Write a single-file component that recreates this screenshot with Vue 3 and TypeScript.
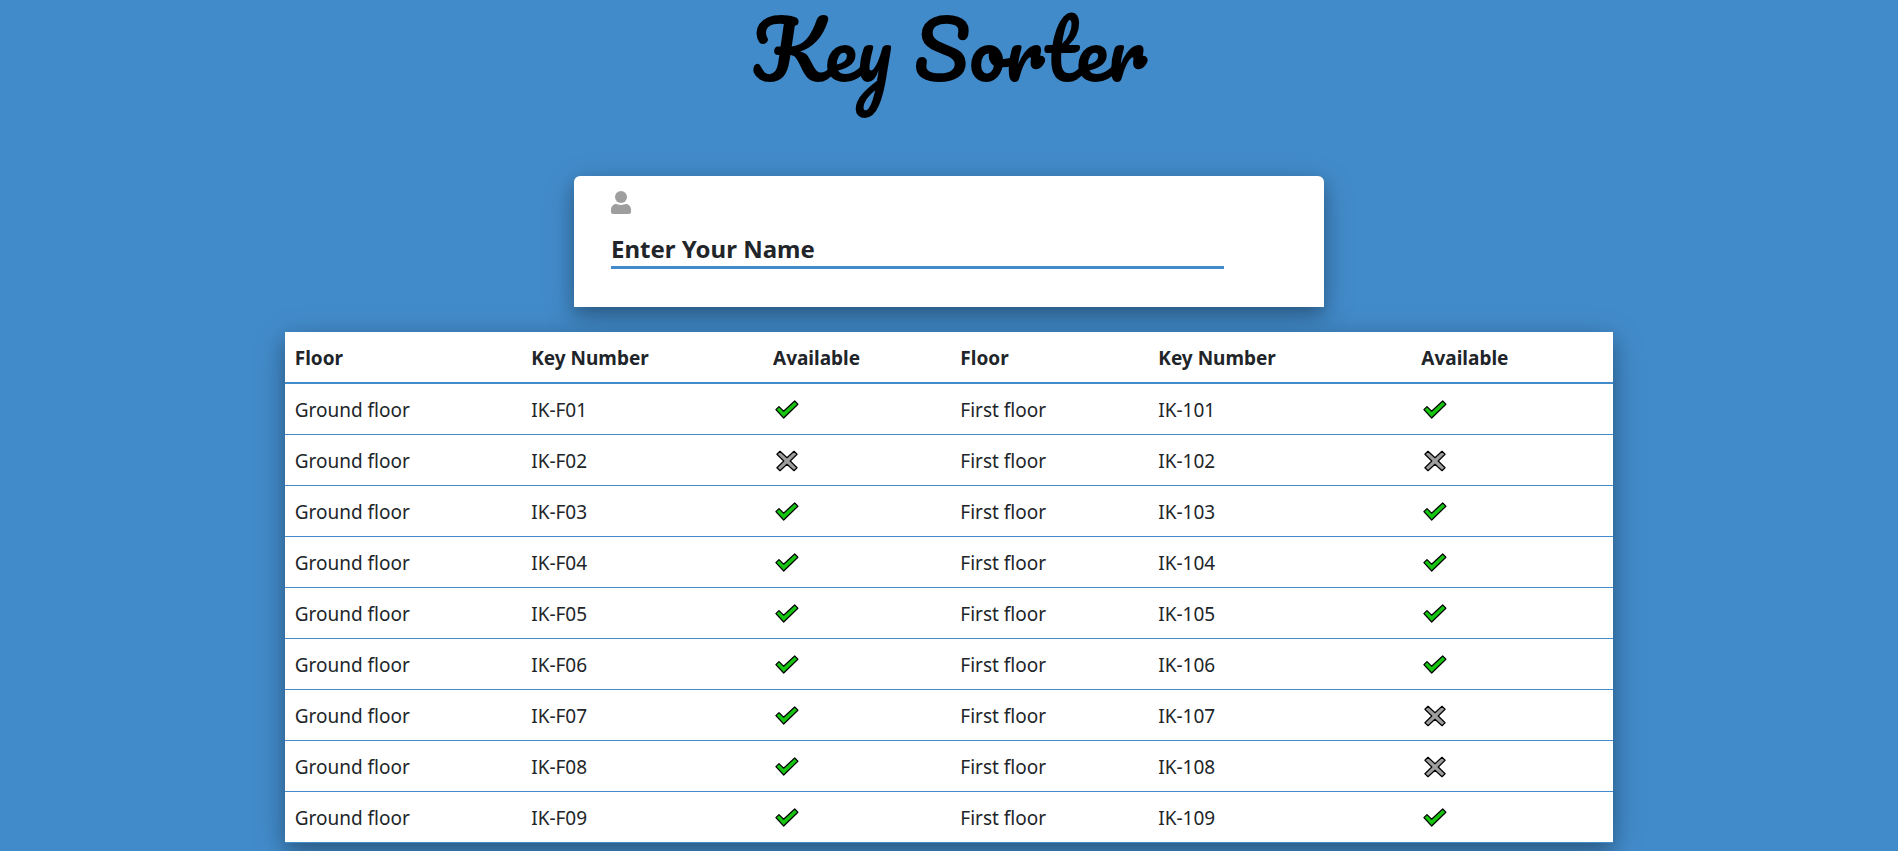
<script setup lang="ts">
import { ref } from 'vue'

interface Key {
  floor: string
  number: string
  available: boolean
}

const name = ref('')
const headings = ['Floor', 'Key Number', 'Available']
const taken = ['IK-F02', 'IK-102', 'IK-107', 'IK-108']

function makeKey(floor: string, number: string): Key {
  return { floor, number, available: !taken.includes(number) }
}

const rows: Key[][] = Array.from({ length: 9 }, (_, i) => [
  makeKey('Ground floor', `IK-F0${i + 1}`),
  makeKey('First floor', `IK-10${i + 1}`),
])
</script>

<template>
  <main class="page">
    <h1 class="title">Key Sorter</h1>

    <form class="card" @submit.prevent>
      <svg class="user" viewBox="0 0 20 23" aria-hidden="true">
        <circle cx="10" cy="6" r="6" />
        <path d="M5.2 13C6.5 13 7.800 13.900 10 13.900S13.500 13 14.800 13C17.800 13 20 15.600 20 18.500V21C20 22.200 19.200 23 18 23H2C.8 23 0 22.200 0 21V18.500C0 15.600 2.200 13 5.200 13Z" />
      </svg>
      <input v-model="name" class="name" type="text" placeholder="Enter Your Name" aria-label="Enter Your Name" />
    </form>

    <table class="keys">
      <colgroup>
        <col class="c1" /><col class="c2" /><col class="c3" /><col class="c4" /><col class="c5" /><col class="c6" />
      </colgroup>
      <thead>
        <tr>
          <template v-for="side in 2" :key="side">
            <th v-for="h in headings" :key="h" scope="col">{{ h }}</th>
          </template>
        </tr>
      </thead>
      <tbody>
        <tr v-for="(row, i) in rows" :key="i">
          <template v-for="k in row" :key="k.number">
            <td>{{ k.floor }}</td>
            <td>{{ k.number }}</td>
            <td>
              <svg v-if="k.available" class="mark yes" viewBox="0 0 26 26" role="img" aria-label="Available">
                <path d="M2.900 12.700L6 9.600L10.600 14.200L21.700 4L24.900 7.200L10.700 21Z" />
              </svg>
              <svg v-else class="mark no" viewBox="0 0 26 26" role="img" aria-label="Taken">
                <path d="M7 3.300L14 9.700L21 3.300L24.100 6.300L17.200 13L24.100 19.700L21 22.700L14 16.300L7 22.700L3.900 19.700L10.800 13L3.900 6.300Z" />
              </svg>
            </td>
          </template>
        </tr>
      </tbody>
    </table>
  </main>
</template>

<style>
body {
  margin: 0;
  background: #428bca;
}
</style>

<style scoped>
.page {
  box-sizing: border-box;
  display: flex;
  flex-direction: column;
  align-items: center;
  min-height: 100vh;
  color: #212529;
  font-family: "Segoe UI", "Noto Sans", sans-serif;
}
.title {
  margin: 0 0 80px;
  color: #000;
  font-family: Pacifico, cursive;
  font-size: 80px;
  font-weight: 400;
  line-height: 96px;
}
.card {
  box-sizing: border-box;
  display: flex;
  flex-direction: column;
  width: 750px;
  max-width: 100%;
  margin-bottom: 25px;
  padding: 15px 100px 38px 37px;
  background: #fff;
  border-radius: 6px 6px 0 0;
  box-shadow: 0 8px 16px rgba(0, 0, 0, 0.2), 0 8px 32px rgba(0, 0, 0, 0.22);
}
.user {
  width: 20px;
  height: 23px;
  margin-bottom: 16px;
  fill: #9e9e9e;
}
.name {
  box-sizing: border-box;
  width: 100%;
  height: 39px;
  padding: 0;
  border: 0;
  border-bottom: 3px solid #428bca;
  background: none;
  color: #212529;
  font: 700 24px "Segoe UI", "Noto Sans", sans-serif;
  outline: 0;
}
.name::placeholder {
  color: #212529;
  opacity: 1;
}
.keys {
  width: 70%;
  table-layout: fixed;
  border-collapse: separate;
  border-spacing: 0;
  background: #fff;
  box-shadow: 0 8px 16px rgba(0, 0, 0, 0.2), 0 8px 32px rgba(0, 0, 0, 0.22);
  font-size: 19px;
  line-height: 30px;
}
.c1 { width: 17.8%; }
.c2 { width: 18.2%; }
.c3 { width: 14.1%; }
.c4 { width: 14.9%; }
.c5 { width: 19.8%; }
.c6 { width: 15.2%; }
.keys th,
.keys td {
  padding: 11px 10px 9px;
  border-bottom: 1px solid #428bca;
  text-align: left;
  vertical-align: middle;
}
.keys th {
  border-bottom-width: 2px;
  font-weight: 700;
}
.mark {
  display: block;
  width: 26px;
  height: 26px;
  stroke: #000;
  stroke-width: 1.2;
  stroke-linejoin: round;
}
.yes {
  fill: #17c411;
}
.no {
  fill: #9e9e9e;
}
</style>
